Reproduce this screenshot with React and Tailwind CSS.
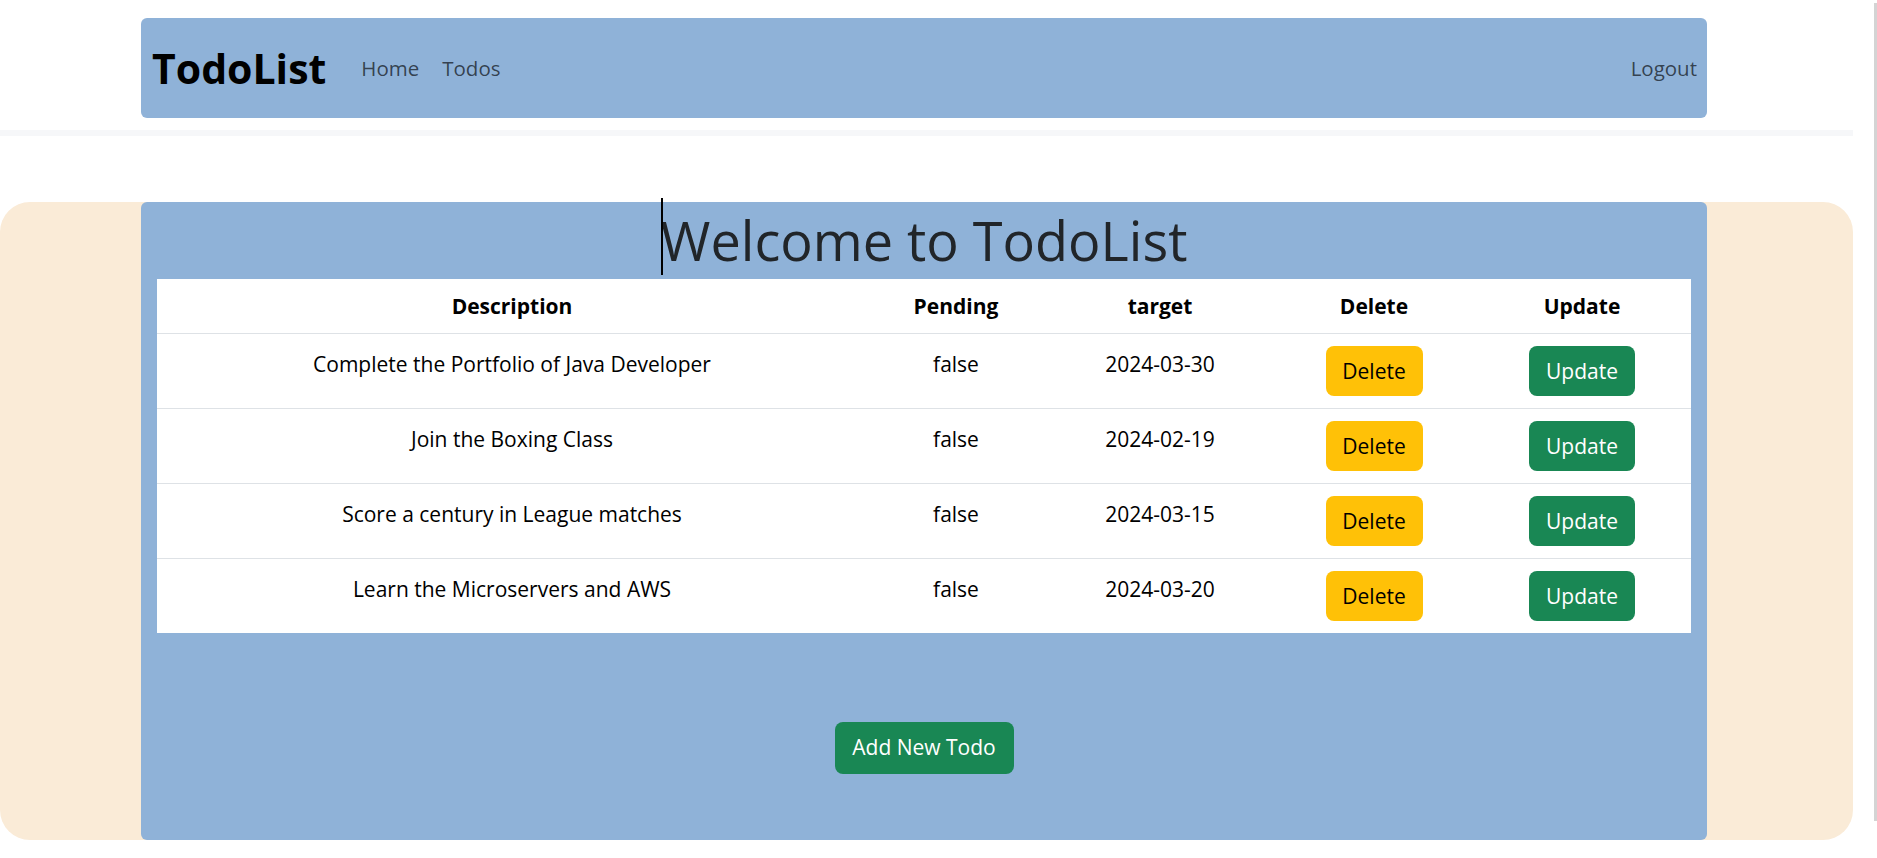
import React from 'react';

const todos = [
  { id: 1, description: 'Complete the Portfolio of Java Developer', done: 'false', target: '2024-03-30' },
  { id: 2, description: 'Join the Boxing Class', done: 'false', target: '2024-02-19' },
  { id: 3, description: 'Score a century in League matches', done: 'false', target: '2024-03-15' },
  { id: 4, description: 'Learn the Microservers and AWS', done: 'false', target: '2024-03-20' },
];

const Header = () => (
  <header className="pt-[18px]">
    <nav className="ml-[141px] mr-[146px] h-[100px] flex items-center bg-[#8fb2d8] rounded-md pl-[11px] pr-[10px]">
      <a className="text-[41px] font-bold text-black leading-none">TodoList</a>
      <div className="flex items-center ml-[35px] gap-[23px] text-[20.5px] text-black/65">
        <a>Home</a>
        <a>Todos</a>
      </div>
      <div className="ml-auto text-[20.5px] text-black/65">
        <a>Logout</a>
      </div>
    </nav>
    <div className="mt-[12px] h-[6px] bg-[#f6f7f9]" />
  </header>
);

const TodoTable = () => (
  <table className="mx-[16px] w-[1534px] table-fixed bg-white text-[21px] text-black">
    <colgroup>
      <col className="w-[710px]" />
      <col className="w-[178px]" />
      <col className="w-[230px]" />
      <col className="w-[198px]" />
      <col className="w-[218px]" />
    </colgroup>
    <thead>
      <tr className="border-b border-[#dee2e6] font-bold">
        <th className="py-[12px] leading-[30px]">Description</th>
        <th className="py-[12px] leading-[30px]">Pending</th>
        <th className="py-[12px] leading-[30px]">target</th>
        <th className="py-[12px] leading-[30px]">Delete</th>
        <th className="py-[12px] leading-[30px]">Update</th>
      </tr>
    </thead>
    <tbody>
      {todos.map((todo) => (
        <tr key={todo.id} className="border-b border-[#dee2e6] last:border-b-0 text-center align-top">
          <td className="pt-[15px] pb-[12px] leading-[30px]">{todo.description}</td>
          <td className="pt-[15px] pb-[12px] leading-[30px]">{todo.done}</td>
          <td className="pt-[15px] pb-[12px] leading-[30px]">{todo.target}</td>
          <td className="py-[12px]">
            <button className="mx-auto block h-[50px] w-[97px] rounded-[8px] bg-[#ffc107] text-black leading-[30px]">Delete</button>
          </td>
          <td className="py-[12px]">
            <button className="mx-auto block h-[50px] w-[106px] rounded-[8px] bg-[#198754] text-white leading-[30px]">Update</button>
          </td>
        </tr>
      ))}
    </tbody>
  </table>
);

export default function App() {
  return (
    <div className="min-h-[858px] bg-white flex font-['Open_Sans','Noto_Sans',sans-serif]">
      <div className="w-[1853px]">
        <Header />
        <main className="mt-[66px] bg-[#faebd7] rounded-[30px]">
          <div className="ml-[141px] mr-[146px] bg-[#8fb2d8] rounded-md pb-[66px]">
            <div className="flex justify-center h-[77px]">
              <h1 className="relative text-[54px] leading-[77px] text-[#212529]">
                <span className="absolute left-0 top-[-4px] h-[77px] w-[2px] bg-black" />
                Welcome to TodoList
              </h1>
            </div>
            <TodoTable />
            <div className="flex justify-center mt-[89px]">
              <button className="h-[52px] w-[179px] rounded-[8px] bg-[#198754] text-white text-[21px]">Add New Todo</button>
            </div>
          </div>
        </main>
      </div>
      <div className="flex-1 flex justify-end">
        <div className="w-[3px] h-[818px] mt-[3px] bg-[#d4d4d4]" />
      </div>
    </div>
  );
}
